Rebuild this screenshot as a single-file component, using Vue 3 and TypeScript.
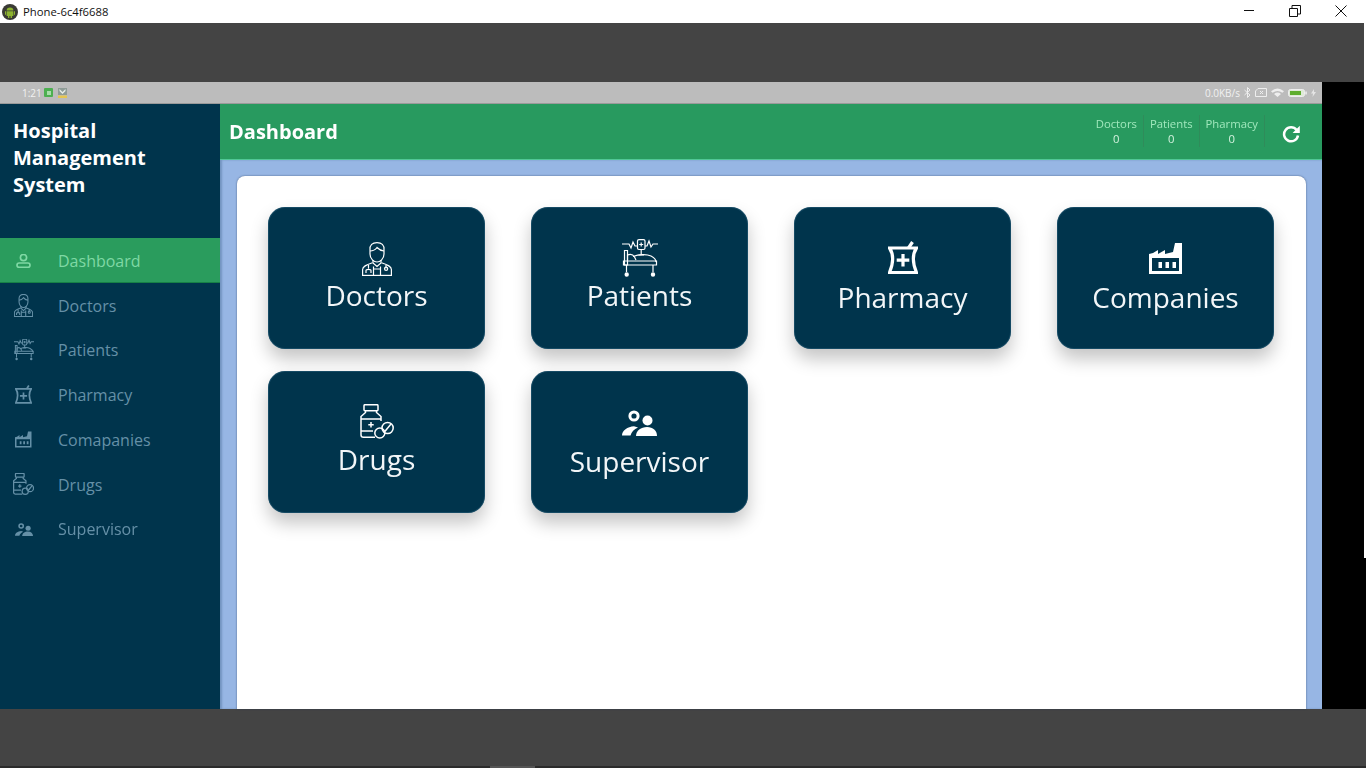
<script setup lang="ts">
interface Glyph {
  box: string
  w: number
  h: number
  navW: number
  navH: number
  sw: number
  navSw: number
  lines: string[]
  solid: string[]
}

const glyphs: Record<string, Glyph> = {
  dashboard: {
    box: '0 0 15 14', w: 15, h: 14, navW: 15, navH: 14, sw: 1.6, navSw: 1.7,
    lines: ['M4.4 3.6a3.1 3.1 0 1 0 6.2 0a3.1 3.1 0 1 0 -6.2 0Z', 'M3.2 9h8.6a2.2 2.2 0 0 1 0 4.4H3.2a2.2 2.2 0 0 1 0-4.4Z'],
    solid: []
  },
  doctors: {
    box: '0 0 30 34', w: 30, h: 34, navW: 19, navH: 23, sw: 1.2, navSw: 1.7,
    lines: [
      'M8 8C7.5 3 10.5.6 15 .6S22.5 3 22 8V12C22 17 18 20 15 20S8 17 8 12Z',
      'M8 9C11 9 13.5 7.5 15 5.5C17 7.5 20 9 22 9',
      'M11 18V21L15 24.5L19 21V18',
      'M.6 33V27.5C.6 24.5 4 23 10.5 20.8M29.4 33V27.5C29.4 24.5 26 23 19.5 20.8',
      'M0 33.4H30',
      'M11.5 24.5V33M18.5 24.5V33M11.5 27H18.5',
      'M6.5 23V26.5M4 31V28.5C4 27 9 27 9 28.5V31M24 23V26.5',
      'M22.5 26.8a1.6 1.6 0 1 0 3.2 0a1.6 1.6 0 1 0 -3.2 0Z'
    ],
    solid: []
  },
  patients: {
    box: '0 0 36 41', w: 36, h: 41, navW: 20, navH: 23, sw: 1.2, navSw: 1.8,
    lines: [
      'M0 5H7L9 9L11 3L13 7H15',
      'M15.5 2Q15.5 .6 17 .6H21.5Q23 .6 23 2V9Q23 10.5 21.5 10.5H17Q15.5 10.5 15.5 9Z',
      'M19.2 3.5V7.5M17.2 5.5H21.2',
      'M19.2 10.5V16M16.5 16H22',
      'M23 7H25L27 2L29 8L31 5H36',
      'M2.5 11.5H5.5V26H2.5Z',
      'M5.5 21V16C8 15 11 15.5 12.5 18L14 21',
      'M11 17.5C17 15 25 15 29 17C32.5 18.8 34 20.5 34 23',
      'M1.5 22H34.5V26H1.5Z',
      'M4.5 26V33M31 26V33'
    ],
    solid: ['M2.5 35.5a2.2 2.2 0 1 0 4.4 0a2.2 2.2 0 1 0 -4.4 0Z', 'M28.8 35.5a2.2 2.2 0 1 0 4.4 0a2.2 2.2 0 1 0 -4.4 0Z']
  },
  pharmacy: {
    box: '0 0 30 37', w: 30, h: 37, navW: 17, navH: 21, sw: 3.2, navSw: 3,
    lines: [
      'M1.5 7H28.5C24.5 13 24.5 22 28.5 31.5H1.5C5.5 22 5.5 13 1.5 7Z',
      'M15 13V25.5M8.7 19.2H21.3',
      'M20.5 7L24.5 1'
    ],
    solid: []
  },
  companies: {
    box: '0 0 34 35', w: 34, h: 35, navW: 17, navH: 18, sw: 0, navSw: 0,
    lines: [],
    solid: [
      'M0 32V12L4 11L9 8V12L16 8V12L24 10L26 1H33V32ZM3 16V29H30V16Z',
      'M9.5 20H13V26H9.5ZM16.5 20H20V26H16.5ZM23.5 20H27V26H23.5Z'
    ]
  },
  drugs: {
    box: '0 0 34 38', w: 34, h: 38, navW: 21, navH: 24, sw: 1.5, navSw: 2,
    lines: [
      'M5 .7H17Q18 .7 18 1.7V5.7Q18 6.7 17 6.7H5Q4 6.7 4 5.7V1.7Q4 .7 5 .7Z',
      'M5.5 6.7V8.5L1 12.5V31C1 32.5 2 33.3 3.5 33.3H15',
      'M16.5 6.7V8.5L21 12.5V17',
      'M1 15H21M1 27H13',
      'M11 18V23.5M8.3 20.8H13.7',
      'M14.8 29a5 5 0 1 0 10 0a5 5 0 1 0 -10 0Z',
      'M22 24a5.6 5.6 0 1 0 11.2 0a5.6 5.6 0 1 0 -11.2 0Z',
      'M24 28.5L31 20'
    ],
    solid: []
  },
  supervisor: {
    box: '0 0 35 26', w: 35, h: 26, navW: 18, navH: 13, sw: 0, navSw: 0,
    lines: [],
    solid: [
      'M6.4 6a5.6 5.6 0 1 0 11.2 0a5.6 5.6 0 1 0 -11.2 0ZM9.4 6a2.6 2.6 0 1 1 5.2 0a2.6 2.6 0 1 1 -5.2 0Z',
      'M20.5 10.5a5 5 0 1 0 10 0a5 5 0 1 0 -10 0Z',
      'M14 26C14 20.5 19 17 25 17S35 20.5 35 26Z',
      'M0 25.5C0 20.5 5.5 16.5 12 16.2L16 17.5C12 19 9.5 22 8.5 25.5Z'
    ]
  }
}

const nav = [
  { icon: 'dashboard', label: 'Dashboard', active: true },
  { icon: 'doctors', label: 'Doctors', active: false },
  { icon: 'patients', label: 'Patients', active: false },
  { icon: 'pharmacy', label: 'Pharmacy', active: false },
  { icon: 'companies', label: 'Comapanies', active: false },
  { icon: 'drugs', label: 'Drugs', active: false },
  { icon: 'supervisor', label: 'Supervisor', active: false }
]

const tiles = [
  { icon: 'doctors', label: 'Doctors', tall: false },
  { icon: 'patients', label: 'Patients', tall: false },
  { icon: 'pharmacy', label: 'Pharmacy', tall: true },
  { icon: 'companies', label: 'Companies', tall: true },
  { icon: 'drugs', label: 'Drugs', tall: false },
  { icon: 'supervisor', label: 'Supervisor', tall: true }
]

const stats = [
  { label: 'Doctors', value: 0 },
  { label: 'Patients', value: 0 },
  { label: 'Pharmacy', value: 0 }
]
</script>

<template>
  <div class="desktop">
    <div class="titlebar">
      <svg class="app-logo" viewBox="0 0 16 16" width="16" height="16">
        <circle cx="8" cy="8" r="8" fill="#3a3a34" />
        <path d="M4.6 6.6a3.4 3.2 0 0 1 6.8 0Z" fill="#8db32f" />
        <path d="M4.6 7.2H11.4V11.4Q11.4 12 10.8 12H10V14H8.6V12H7.4V14H6V12H5.2Q4.6 12 4.6 11.4Z" fill="#8db32f" />
        <path d="M3 7.2H4V10.8H3ZM12 7.2H13V10.8H12Z" fill="#8db32f" />
      </svg>
      <span class="window-name">Phone-6c4f6688</span>
      <div class="window-controls">
        <svg viewBox="0 0 12 12" width="12" height="12"><path d="M1 5.5H11" stroke="#111" fill="none" /></svg>
        <svg viewBox="0 0 12 12" width="12" height="12"><path d="M.5 3.5H8.5V11.5H.5ZM3 3.5V.5H11.5V9H8.5" stroke="#111" fill="none" /></svg>
        <svg viewBox="0 0 12 12" width="12" height="12"><path d="M.5 .5L11.5 11.5M11.5 .5L.5 11.5" stroke="#111" fill="none" /></svg>
      </div>
    </div>

    <div class="gap-top"></div>

    <div class="device-row">
      <div class="device">
        <div class="statusbar">
          <div class="status-left">
            <span class="clock">1:21</span>
            <svg viewBox="0 0 9 9" width="9" height="9"><rect width="9" height="9" rx="1" fill="#4caf50" /><path d="M3 3H7V7H3Z" fill="#a8dcaa" /></svg>
            <svg viewBox="0 0 9 10" width="9" height="10"><rect width="9" height="7" fill="#8f9c97" /><path d="M1.5 1L4.5 4L7.5 1V3L4.5 6L1.5 3Z" fill="#e8eee9" /><rect y="7.5" width="9" height="2.5" fill="#e5c651" /></svg>
          </div>
          <div class="status-right">
            <span>0.0KB/s</span>
            <svg viewBox="0 0 7 11" width="7" height="11"><path d="M.5 3L6 8L3.5 10.5V.5L6 3L.5 8" stroke="#eee" fill="none" /></svg>
            <svg viewBox="0 0 12 9" width="12" height="9"><path d="M3 .5H11.5V8.5H.5V3Z" stroke="#eee" fill="none" /><path d="M5 3L8 6M8 3L5 6" stroke="#eee" fill="none" /></svg>
            <svg viewBox="0 0 13 9" width="13" height="9"><path d="M0 3.2Q6.5-2 13 3.2L11.4 4.8Q6.5 1 1.6 4.8ZM3 6Q6.5 3.2 10 6L6.5 9Z" fill="#eee" /></svg>
            <svg viewBox="0 0 19 8" width="19" height="8"><rect x=".5" y=".5" width="16" height="7" rx="2" fill="#dfe9d8" stroke="#eee" /><rect x="2" y="2" width="11" height="4" fill="#5fae2e" /><rect x="17.3" y="2.5" width="1.5" height="3" fill="#eee" /></svg>
            <svg viewBox="0 0 5 8" width="5" height="8"><path d="M3 0L0 4.5H2L1.5 8L5 3H3Z" fill="#e4e4e4" /></svg>
          </div>
        </div>

        <div class="screen">
          <aside class="sidebar">
            <h1 class="brand">Hospital<br />Management<br />System</h1>
            <nav class="menu">
              <a v-for="item in nav" :key="item.label" class="menu-item" :class="{ active: item.active }">
                <span class="menu-icon">
                  <svg :viewBox="glyphs[item.icon].box" :width="glyphs[item.icon].navW" :height="glyphs[item.icon].navH" preserveAspectRatio="none">
                    <path v-for="d in glyphs[item.icon].lines" :key="d" :d="d" class="line" :stroke-width="glyphs[item.icon].navSw" />
                    <path v-for="d in glyphs[item.icon].solid" :key="d" :d="d" class="solid" />
                  </svg>
                </span>
                <span>{{ item.label }}</span>
              </a>
            </nav>
          </aside>

          <main class="main">
            <header class="topbar">
              <h2 class="page-title">Dashboard</h2>
              <div class="stats">
                <div v-for="s in stats" :key="s.label" class="stat">
                  <span class="stat-label">{{ s.label }}</span>
                  <span class="stat-value">{{ s.value }}</span>
                </div>
                <svg class="refresh" viewBox="0 0 18 18" width="18" height="18">
                  <path d="M14.6 5A7 7 0 1 0 16 10.5" fill="none" stroke="#fff" stroke-width="2.5" />
                  <path d="M17.8 .8V8H10.6Z" fill="#fff" />
                </svg>
              </div>
            </header>

            <div class="content">
              <section class="panel">
                <div class="tiles">
                  <button v-for="t in tiles" :key="t.label" class="tile" type="button">
                    <span class="tile-icon" :class="{ tall: t.tall }">
                      <svg :viewBox="glyphs[t.icon].box" :width="glyphs[t.icon].w" :height="glyphs[t.icon].h">
                        <path v-for="d in glyphs[t.icon].lines" :key="d" :d="d" class="line" :stroke-width="glyphs[t.icon].sw" />
                        <path v-for="d in glyphs[t.icon].solid" :key="d" :d="d" class="solid" />
                      </svg>
                    </span>
                    <span class="tile-label">{{ t.label }}</span>
                  </button>
                </div>
              </section>
            </div>
          </main>
        </div>
      </div>
      <div class="device-side"></div>
    </div>

    <div class="gap-bottom"></div>
    <div class="taskbar-edge">
      <span class="edge-thumb"></span>
    </div>
    <div class="window-edge"></div>
  </div>
</template>

<style>
html, body { margin: 0; overflow: hidden; background: #444; }
</style>

<style scoped>
.desktop {
  position: relative;
  width: 1366px;
  height: 768px;
  display: flex;
  flex-direction: column;
  overflow: hidden;
  font-family: "Open Sans", "Noto Sans", sans-serif;
}
.titlebar {
  height: 23px;
  flex: none;
  background: #fff;
  display: flex;
  align-items: center;
  padding-left: 2px;
  color: #111;
}
.app-logo { margin-right: 5px; }
.window-name { font-size: 11.3px; }
.window-controls {
  margin-left: auto;
  display: flex;
  gap: 34px;
  margin-right: 19px;
  margin-top: -2px;
}
.gap-top {
  height: 59px;
  flex: none;
  background: #444;
}
.window-edge {
  position: absolute;
  top: 23px;
  right: 0;
  width: 2px;
  height: 535px;
  background: #fff;
}
.device-row {
  height: 627px;
  flex: none;
  display: flex;
}
.device {
  width: 1322px;
  display: flex;
  flex-direction: column;
  filter: blur(0.4px);
}
.device-side { flex: 1; background: #000; }
.statusbar {
  height: 22px;
  flex: none;
  box-sizing: border-box;
  background: #bcbcbc;
  border-bottom: 1px solid #9a9a9a;
  display: flex;
  align-items: center;
  justify-content: space-between;
  padding: 0 6px 0 22px;
  font-size: 10px;
  color: #f1f1f1;
}
.status-left, .status-right { display: flex; align-items: center; gap: 4px; }
.status-left { gap: 5px; }
.clock { margin-right: -3px; }
.screen { flex: 1; display: flex; min-height: 0; }
.sidebar {
  width: 220px;
  flex: none;
  background: #00344c;
}
.brand {
  margin: 0;
  height: 134px;
  box-sizing: border-box;
  padding: 12.5px 0 0 13px;
  font-size: 20px;
  line-height: 27px;
  font-weight: 700;
  color: #fff;
}
.menu { display: flex; flex-direction: column; }
.menu-item {
  height: 44.75px;
  box-sizing: border-box;
  padding-top: 1px;
  display: flex;
  align-items: center;
  font-size: 16px;
  color: #6590a7;
}
.menu-item.active {
  background: #2a9c5d;
  border-bottom: 1px solid #178046;
  padding-top: 2px;
  color: #7fd8a4;
}
.menu-icon {
  width: 47px;
  margin-right: 11px;
  display: flex;
  justify-content: center;
}
.line {
  fill: none;
  stroke: currentColor;
}
.solid {
  fill: currentColor;
  fill-rule: evenodd;
}
.main { flex: 1; min-width: 0; display: flex; flex-direction: column; }
.topbar {
  height: 56px;
  flex: none;
  box-sizing: border-box;
  background: #289a5f;
  border-bottom: 1px solid #52c796;
  display: flex;
  align-items: center;
  padding: 0 22px 0 9px;
}
.page-title {
  margin: 0;
  font-size: 20px;
  font-weight: 700;
  color: #fff;
}
.stats { margin-left: auto; display: flex; align-items: center; }
.stat {
  display: flex;
  flex-direction: column;
  align-items: center;
  padding: 0 6px;
  height: 32px;
  box-sizing: border-box;
  justify-content: center;
  border-right: 1px solid #2f8c5a;
  line-height: 15px;
  font-size: 11.3px;
  margin-top: -1px;
}
.stat-label { color: #a1e8bd; }
.stat-value { color: #d3f2de; }
.refresh { margin-left: 17px; margin-top: 4px; }
.content {
  flex: 1;
  min-height: 0;
  display: flex;
  background: #97b6e4;
  box-shadow: inset 2px 0 2px rgba(50, 85, 125, 0.35);
  padding: 16px 16px 0 17px;
}
.panel {
  flex: 1;
  background: #fff;
  border-radius: 8px 8px 0 0;
  box-shadow: 0 0 2px rgba(30, 50, 80, 0.7);
  padding: 31px 32px 0 31px;
}
.tiles {
  display: grid;
  grid-template-columns: repeat(4, 217px);
  grid-auto-rows: 142px;
  justify-content: space-between;
  row-gap: 22px;
}
.tile {
  border: 0;
  padding: 0 0 2px;
  border-radius: 17px;
  background: #00344c;
  color: #fff;
  font-family: inherit;
  display: flex;
  flex-direction: column;
  align-items: center;
  justify-content: center;
  box-shadow: inset 0 0 0 1px rgba(70, 125, 155, 0.3), 0 10px 18px rgba(0, 0, 0, 0.23);
}
.tile-icon {
  height: 36px;
  display: flex;
  align-items: center;
  justify-content: center;
}
.tile-icon.tall { height: 40px; }
.tile-label {
  font-size: 28px;
  line-height: 36px;
  color: #f2f6f8;
}
.gap-bottom {
  height: 57px;
  flex: none;
  background: #444;
}
.taskbar-edge {
  height: 2px;
  flex: none;
  background: #2b2b2b;
  padding-left: 490px;
}
.edge-thumb {
  display: block;
  width: 45px;
  height: 2px;
  background: #555;
}
</style>
